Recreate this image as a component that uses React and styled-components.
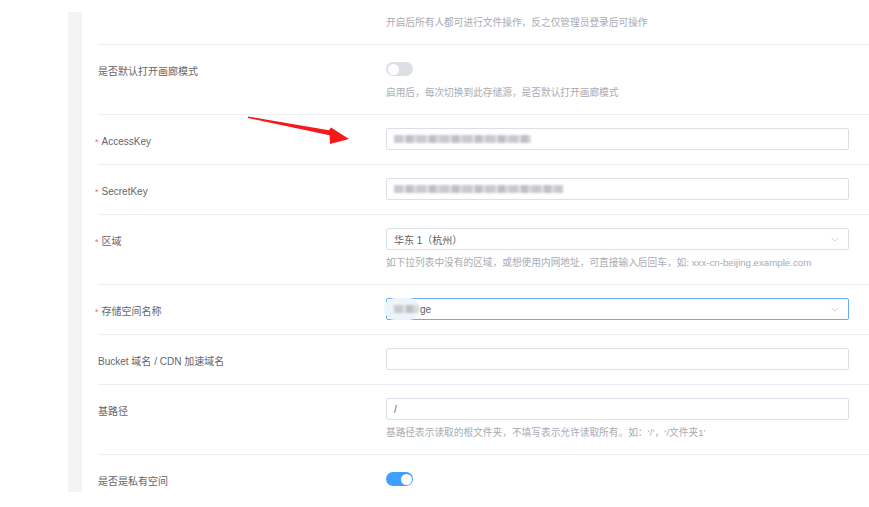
import React from "react";
import styled, { createGlobalStyle } from "styled-components";

const GlobalStyle = createGlobalStyle`
  html, body {
    margin: 0;
    background: #fff;
    font-family: "Liberation Sans", "Noto Sans CJK SC", sans-serif;
  }
`;

const rows = [
  {
    label: "是否默认打开画廊模式",
    type: "switch",
    on: false,
    help: "启用后，每次切换到此存储源，是否默认打开画廊模式",
  },
  { label: "AccessKey", required: true, type: "input", blur: 137 },
  { label: "SecretKey", required: true, type: "input", blur: 169 },
  {
    label: "区域",
    required: true,
    type: "select",
    value: "华东 1（杭州）",
    help: "如下拉列表中没有的区域，或想使用内网地址，可直接输入后回车，如: xxx-cn-beijing.example.com",
  },
  { label: "存储空间名称", required: true, type: "bucket" },
  { label: "Bucket 域名 / CDN 加速域名", type: "input" },
  {
    label: "基路径",
    type: "input",
    value: "/",
    help: "基路径表示读取的根文件夹，不填写表示允许读取所有。如：‘/’，‘/文件夹1’",
  },
  { label: "是否是私有空间", type: "switch", on: true },
];

function Control({ row }) {
  if (row.type === "switch") {
    return (
      <ControlLine>
        <Switch on={row.on}>
          <Knob />
        </Switch>
      </ControlLine>
    );
  }
  if (row.type === "select" || row.type === "bucket") {
    const focused = row.type === "bucket";
    return (
      <Field focused={focused}>
        {focused ? (
          <>
            <Smudge>
              <BlurText style={{ width: 24 }} />
            </Smudge>
            <FieldText>ge</FieldText>
          </>
        ) : (
          <FieldText>{row.value}</FieldText>
        )}
        <Chevron viewBox="0 0 10 6">
          <path d="M1 1 L5 5 L9 1" fill="none" stroke="#c0c4cc" strokeWidth="1" />
        </Chevron>
      </Field>
    );
  }
  return (
    <Field>
      {row.blur ? <BlurText style={{ width: row.blur }} /> : null}
      {row.value ? <FieldText>{row.value}</FieldText> : null}
    </Field>
  );
}

function App() {
  return (
    <>
      <GlobalStyle />
      <Page>
        <Frame>
          <Strip />
          <Panel>
            <TopRow>
              <Spacer />
              <Help>开启后所有人都可进行文件操作，反之仅管理员登录后可操作</Help>
            </TopRow>
            {rows.map((row, idx) => (
              <Row key={idx}>
                <Label>
                  {row.required ? <Star>*</Star> : null}
                  {row.label}
                </Label>
                <div>
                  <Control row={row} />
                  {row.help ? <Help spaced>{row.help}</Help> : null}
                </div>
              </Row>
            ))}
          </Panel>
        </Frame>
        <Arrow viewBox="0 0 869 507" width="869" height="507">
          <polygon
            points="248,116.4 329,130.2 331,127.5 349,139 330,144 329.5,135.2 248,118"
            fill="#f5191b"
          />
        </Arrow>
      </Page>
    </>
  );
}

const Page = styled.div`
  position: relative;
  width: 869px;
  height: 507px;
  padding-top: 12px;
  box-sizing: border-box;
  overflow: hidden;
`;

const Frame = styled.div`
  display: flex;
  height: 480px;
  margin-left: 68px;
  overflow: hidden;
`;

const Strip = styled.div`
  width: 14px;
  flex-shrink: 0;
  background: #f2f3f5;
`;

const Panel = styled.div`
  flex: 1;
  padding-left: 16px;
`;

const Row = styled.div`
  display: grid;
  grid-template-columns: 288px 463px;
  align-items: start;
  padding: 13px 20px 14px 0;
  border-bottom: 1px solid #ebeef5;
`;

const TopRow = styled(Row)`
  padding-top: 4px;
`;

const Spacer = styled.div``;

const Label = styled.div`
  height: 22px;
  box-sizing: border-box;
  padding-top: 2.5px;
  font-size: 10px;
  line-height: 22px;
  color: #63666b;
  white-space: nowrap;
`;

const Star = styled.span`
  color: #f56c6c;
  font-size: 9px;
  margin-left: -3px;
  margin-right: 3px;
`;

const Help = styled.div`
  font-size: 9.7px;
  line-height: 14px;
  color: #a8abb2;
  margin-top: ${(props) => (props.spaced ? "6px" : "0")};
  white-space: nowrap;
`;

const ControlLine = styled.div`
  height: 22px;
  display: flex;
  align-items: center;
`;

const Switch = styled.div`
  width: 27px;
  height: 14px;
  border-radius: 7px;
  background: ${(props) => (props.on ? "#409eff" : "#dcdfe6")};
  display: flex;
  align-items: center;
  justify-content: ${(props) => (props.on ? "flex-end" : "flex-start")};
  padding: 0 1.5px;
  box-sizing: border-box;
`;

const Knob = styled.div`
  width: 11px;
  height: 11px;
  border-radius: 50%;
  background: #fff;
`;

const Field = styled.div`
  position: relative;
  height: 22px;
  box-sizing: border-box;
  border: 1px solid ${(props) => (props.focused ? "#66acf5" : "#dcdfe6")};
  border-radius: 2px;
  display: flex;
  align-items: center;
  padding-left: 7px;
  background: #fff;
`;

const FieldText = styled.span`
  font-size: 10px;
  color: #606266;
`;

const BlurText = styled.span`
  display: block;
  height: 8px;
  background: repeating-linear-gradient(
    90deg,
    #c9cacd 0 9px,
    #e0e1e3 9px 12px,
    #bfc0c3 12px 19px,
    #d8d9db 19px 23px
  );
  filter: blur(1.3px);
`;

const Smudge = styled.span`
  display: flex;
  align-items: center;
  margin-left: -10px;
  padding: 0 2px 0 10px;
  height: 22px;
  border-radius: 11px;
  background: #eef4fc;
  filter: blur(0.6px);
`;

const Chevron = styled.svg`
  position: absolute;
  right: 9px;
  top: 8px;
  width: 8px;
  height: 5px;
`;

const Arrow = styled.svg`
  position: absolute;
  left: 0;
  top: 0;
  pointer-events: none;
`;

export default App;
